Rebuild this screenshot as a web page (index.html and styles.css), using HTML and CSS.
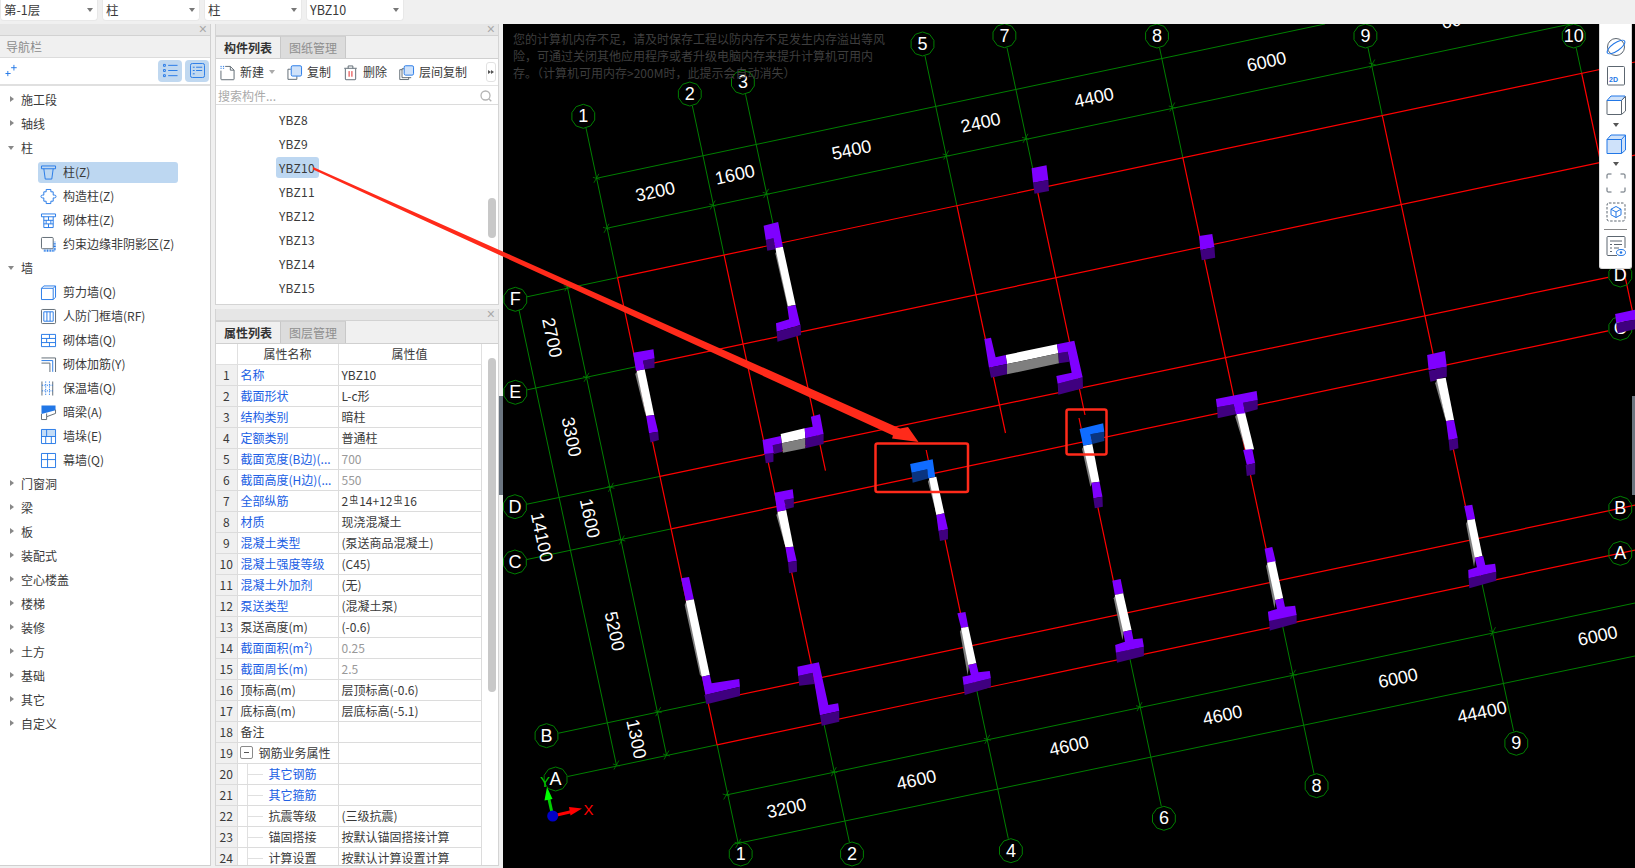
FILE: index.html
```html
<!DOCTYPE html>
<html lang="zh">
<head>
<meta charset="utf-8">
<title>构件列表</title>
<link rel="stylesheet" href="styles.css">
</head>
<body>
<svg width="0" height="0" class="defs">
  <defs>
    <polygon id="bub" points="11.4,3.7 7.1,9.7 0,12 -7.1,9.7 -11.4,3.7 -11.4,-3.7 -7.1,-9.7 0,-12 7.1,-9.7 11.4,-3.7"/>
    <path id="tk" d="M-2.5 4.5L2.5 -4.5M-3.5 -1L3.5 1"/>
  </defs>
</svg>

<header class="topbar">
  <div class="pick"><span>第-1层</span><i class="tri"></i></div>
  <div class="pick"><span>柱</span><i class="tri"></i></div>
  <div class="pick"><span>柱</span><i class="tri"></i></div>
  <div class="pick"><span>YBZ10</span><i class="tri"></i></div>
</header>

<main class="main">
  <aside class="nav">
    <div class="strip"><span class="close">×</span></div>
    <div class="nav-title">导航栏</div>
    <div class="nav-tools">
      <svg class="ico star" viewBox="0 0 16 16"><path class="b" d="M9.5 2v6M6.5 5h6M3 8.5v5.500M.5 11.2h5.500"/></svg>
      <span class="grow"></span>
      <span class="tbtn"><svg viewBox="0 0 16 16"><path class="b" d="M5.500 2.500h10M5.500 8h10M5.500 13.500h10"/><path class="b" d="M.5 1.500h2v2h-2zM.5 7h2v2h-2zM.5 12.500h2v2h-2z"/></svg></span>
      <span class="tbtn"><svg viewBox="0 0 16 16"><rect class="b" x=".5" y=".5" width="15" height="15" rx="2"/><path class="b" d="M3 4.500h2M6.500 4.500h6.500M3 8h2M6.500 8h6.500M3 11.500h2"/></svg></span>
    </div>
    <div class="tree">
      <div class="row"><i class="car"></i>施工段</div>
      <div class="row"><i class="car"></i>轴线</div>
      <div class="row"><i class="car open"></i>柱</div>
      <div class="sub"><div class="item sel"><svg class="ico" viewBox="0 0 16 16"><path class="b" d="M.5 1h15v3H.5zM3 4l1.500 11h7L13 4"/></svg>柱(Z)</div></div>
      <div class="sub"><div class="item"><svg class="ico" viewBox="0 0 16 16"><path class="b" d="M5.500 .5h5v2.500h2.500v3.500h1.500a1 1 0 0 1 0 3h-1.500v3.500h-2.500v2.500h-5v-2.500H3V9.500H1.500a1 1 0 0 1 0-3H3V3h2.500z"/></svg>构造柱(Z)</div></div>
      <div class="sub"><div class="item"><svg class="ico" viewBox="0 0 16 16"><path class="b" d="M.5 1h15v3H.5zM3 4v11.500h10V4M3 7.800h10M3 11.600h10M8 4v3.800M5.500 7.800v3.800M10.500 7.800v3.800M8 11.600v3.900"/></svg>砌体柱(Z)</div></div>
      <div class="sub"><div class="item"><svg class="ico" viewBox="0 0 16 16"><rect class="k" x=".5" y=".5" width="12.500" height="12" rx="1"/><path class="hatch" d="M3 14.500h11.500V5"/></svg>约束边缘非阴影区(Z)</div></div>
      <div class="row"><i class="car open"></i>墙</div>
      <div class="sub"><div class="item"><svg class="ico" viewBox="0 0 16 16"><path class="b" d="M.5 3.500h12.500v12H.5zM.5 3.500L3 1h12.500v12L13 15.500M13 3.500L15.500 1"/></svg>剪力墙(Q)</div></div>
      <div class="sub"><div class="item"><svg class="ico" viewBox="0 0 16 16"><rect class="k" x=".5" y=".5" width="15" height="15" rx="1"/><path class="b" d="M3 3h10v10H3zM6.300 3v10M9.700 3v10"/></svg>人防门框墙(RF)</div></div>
      <div class="sub"><div class="item"><svg class="ico" viewBox="0 0 16 16"><path class="b" d="M.5 1.500h15v13H.5zM.5 5.800h15M.5 10.200h15M9 1.500v4.300M6 5.800v4.400M9 10.200v4.300"/></svg>砌体墙(Q)</div></div>
      <div class="sub"><div class="item"><svg class="ico" viewBox="0 0 16 16"><path class="k" d="M.5 1h15v15"/><path class="b" d="M.5 3.800h12v12"/><path class="k" d="M.5 6.500h9v9.500"/></svg>砌体加筋(Y)</div></div>
      <div class="sub"><div class="item"><svg class="ico" viewBox="0 0 16 16"><path class="k" d="M1 .5v15M12.500 .5v15"/><path class="dash" d="M5 .5v15M9 .5v15"/><path class="dash" d="M1 4.500h11.500M1 10.500h11.500"/></svg>保温墙(Q)</div></div>
      <div class="sub"><div class="item"><svg class="ico" viewBox="0 0 16 16"><path class="bf" d="M.5 .5h15v5L.5 9.500z"/><path class="k" d="M.5 9.500v6h5.500v-3l9.500-3.500v-4M6 9v3.500"/></svg>暗梁(A)</div></div>
      <div class="sub"><div class="item"><svg class="ico" viewBox="0 0 16 16"><path class="lf" d="M.5 .5h15V8H.5z"/><path class="b" d="M.5 .5h15v15H.5zM.5 8h15M6 .5V8M5 8v7.500M11 8v7.500"/></svg>墙垛(E)</div></div>
      <div class="sub"><div class="item"><svg class="ico" viewBox="0 0 16 16"><path class="b" d="M.5 .5h15v15H.5zM.5 7h15M7 .5v15"/></svg>幕墙(Q)</div></div>
      <div class="row"><i class="car"></i>门窗洞</div>
      <div class="row"><i class="car"></i>梁</div>
      <div class="row"><i class="car"></i>板</div>
      <div class="row"><i class="car"></i>装配式</div>
      <div class="row"><i class="car"></i>空心楼盖</div>
      <div class="row"><i class="car"></i>楼梯</div>
      <div class="row"><i class="car"></i>装修</div>
      <div class="row"><i class="car"></i>土方</div>
      <div class="row"><i class="car"></i>基础</div>
      <div class="row"><i class="car"></i>其它</div>
      <div class="row"><i class="car"></i>自定义</div>
    </div>
  </aside>

  <section class="mid">
    <div class="panel list-panel">
      <div class="strip"><span class="close">×</span></div>
      <div class="tabs"><span class="tab on">构件列表</span><span class="tab">图纸管理</span></div>
      <div class="ctools">
        <span class="act new"><svg class="ico" viewBox="0 0 16 16"><path class="k" d="M5.500 1.500H11l4 4V15a.7.7 0 0 1-.7.7H1.700A.7.7 0 0 1 1 15V6"/><path class="k" d="M11 1.500v4h4"/><path class="dash" d="M.5 1.500h4M.5 3.500h4"/></svg>新建<i class="tri"></i></span>
        <span class="act"><svg class="ico" viewBox="0 0 16 16"><path class="k" d="M4 4.500H1v10.800h9.500V12"/><rect class="bl" x="4.500" y=".8" width="11" height="11" rx="1.500"/></svg>复制</span>
        <span class="act del"><svg class="ico" viewBox="0 0 14 16"><path class="k" d="M1.500 4v11a.7.7 0 0 0 .7.700h9.600a.7.7 0 0 0 .7-.7V4M.3 3.500h13.400M4.500 3.500V1h5v2.500"/><path class="redl" d="M5.500 6.500v6M8.500 6.500v6"/></svg>删除</span>
        <span class="act"><svg class="ico" viewBox="0 0 16 16"><path class="k" d="M3.500 5H.8v10.500h9.500V13M5.500 4H3.200v9.500H13"/><rect class="bl" x="5.500" y=".8" width="10" height="10" rx="1.500"/></svg>层间复制</span>
        <span class="grow"></span>
        <span class="more"><i class="mini"></i><i class="mini"></i></span>
      </div>
      <div class="search"><span class="grow">搜索构件...</span><svg class="sico" viewBox="0 0 12 12"><circle class="gq" cx="5.500" cy="5.500" r="4.500"/><path class="gq" d="M8.800 8.800l2.500 2.500"/></svg></div>
      <div class="items">
        <div class="li"><span>YBZ8</span></div>
        <div class="li"><span>YBZ9</span></div>
        <div class="li"><span class="cur">YBZ10</span></div>
        <div class="li"><span>YBZ11</span></div>
        <div class="li"><span>YBZ12</span></div>
        <div class="li"><span>YBZ13</span></div>
        <div class="li"><span>YBZ14</span></div>
        <div class="li"><span>YBZ15</span></div>
        <i class="thumb t1"></i>
      </div>
    </div>

    <div class="panel prop-panel">
      <div class="strip"><span class="close">×</span></div>
      <div class="tabs"><span class="tab on">属性列表</span><span class="tab">图层管理</span></div>
      <div class="tablewrap">
        <table class="props">
          <colgroup><col class="c0"><col class="c1"><col class="c2"></colgroup>
          <thead><tr><th></th><th>属性名称</th><th>属性值</th></tr></thead>
          <tbody>
            <tr><td>1</td><td class="lnk">名称</td><td>YBZ10</td></tr>
            <tr><td>2</td><td class="lnk">截面形状</td><td>L-c形</td></tr>
            <tr><td>3</td><td class="lnk">结构类别</td><td>暗柱</td></tr>
            <tr><td>4</td><td class="lnk">定额类别</td><td>普通柱</td></tr>
            <tr><td>5</td><td class="lnk">截面宽度(B边)(...</td><td class="gr">700</td></tr>
            <tr><td>6</td><td class="lnk">截面高度(H边)(...</td><td class="gr">550</td></tr>
            <tr><td>7</td><td class="lnk">全部纵筋</td><td>2<span class="rb">虫</span>14+12<span class="rb">虫</span>16</td></tr>
            <tr><td>8</td><td class="lnk">材质</td><td>现浇混凝土</td></tr>
            <tr><td>9</td><td class="lnk">混凝土类型</td><td>(泵送商品混凝土)</td></tr>
            <tr><td>10</td><td class="lnk">混凝土强度等级</td><td>(C45)</td></tr>
            <tr><td>11</td><td class="lnk">混凝土外加剂</td><td>(无)</td></tr>
            <tr><td>12</td><td class="lnk">泵送类型</td><td>(混凝土泵)</td></tr>
            <tr><td>13</td><td>泵送高度(m)</td><td>(-0.6)</td></tr>
            <tr><td>14</td><td class="lnk">截面面积(m²)</td><td class="gr">0.25</td></tr>
            <tr><td>15</td><td class="lnk">截面周长(m)</td><td class="gr">2.5</td></tr>
            <tr><td>16</td><td>顶标高(m)</td><td>层顶标高(-0.6)</td></tr>
            <tr><td>17</td><td>底标高(m)</td><td>层底标高(-5.1)</td></tr>
            <tr><td>18</td><td>备注</td><td></td></tr>
            <tr><td>19</td><td class="grp"><i class="minus"></i>钢筋业务属性</td><td></td></tr>
            <tr><td>20</td><td class="kid lnk">其它钢筋</td><td></td></tr>
            <tr><td>21</td><td class="kid lnk">其它箍筋</td><td></td></tr>
            <tr><td>22</td><td class="kid">抗震等级</td><td>(三级抗震)</td></tr>
            <tr><td>23</td><td class="kid">锚固搭接</td><td>按默认锚固搭接计算</td></tr>
            <tr><td>24</td><td class="kid">计算设置</td><td>按默认计算设置计算</td></tr>
          </tbody>
        </table>
        <i class="thumb t2"></i>
      </div>
    </div>
  </section>

  <section class="canvas">
    <svg class="cad" viewBox="503 24 1132 844" width="1132" height="844">
      <g class="gl">
        <path d="M586 128L617.600 277.600M692.400 106L724.100 255.100M745.500 94.300L777.300 243.800M925 56L956.900 205.700M1007 47.700L1037 188.800M1159.600 48L1182.900 157.900M1368 48L1382.300 115.700M1576.200 48L1581.700 73.500"/>
        <path d="M717.100 744.800L738.200 843.300L740 842M823.600 722.200L849.400 842M976.600 689.700L1008.300 838.700M1129.600 657.300L1161.300 806.300M1282.400 624.900L1314 773.700M1481.800 582.700L1513.700 731.300"/>
        <path d="M527 296.800L617.600 277.600M527.300 389.800L636.600 366.600M526.900 504.200L660 476.400M526.900 559.500L671.200 528.900M558.500 733.200L707.900 701.500M567.600 776.500L717.100 744.800"/>
        <path d="M596.400 178.300L1325 24M606.500 228.300L1570.500 24M726.200 795L1635 603M738.200 843.300L1635 656M519 310L616.400 765M567.300 286.700L666.500 755"/>
        <use href="#tk" x="596.400" y="178.300"/><use href="#tk" x="606.500" y="228.300"/><use href="#tk" x="712.700" y="205"/><use href="#tk" x="766.200" y="193.300"/><use href="#tk" x="946.200" y="155"/><use href="#tk" x="1025.500" y="138.300"/><use href="#tk" x="1172.300" y="107"/><use href="#tk" x="1372.300" y="64"/>
        <use href="#tk" x="567.300" y="286.700"/><use href="#tk" x="586.500" y="377.300"/><use href="#tk" x="610.900" y="487.300"/><use href="#tk" x="621.800" y="540"/><use href="#tk" x="658.200" y="711.700"/><use href="#tk" x="666.500" y="755"/><use href="#tk" x="616.400" y="765"/>
        <use href="#tk" x="726.200" y="795"/><use href="#tk" x="833.800" y="771.700"/><use href="#tk" x="987.300" y="739.300"/><use href="#tk" x="1139.500" y="706.700"/><use href="#tk" x="1293" y="674.300"/><use href="#tk" x="1493" y="631.700"/><use href="#tk" x="738.200" y="843.300"/>
      </g>
      <g class="rl">
        <path d="M617.600 277.600L717.100 744.800M724.100 255.100L823.600 722.200M777.300 243.800L825.500 470.700M956.900 205.700L1005.500 433M926.200 450L976.600 689.700M1037 188.800L1085 415M1079 418L1129.600 657.300M1182.900 157.900L1282.400 624.900M1382.300 115.700L1481.800 582.700M1581.700 73.500L1635 323"/>
        <path d="M617.600 277.600L1635 62M636.600 366.600L1635 155.100M660 476.400L1608 277.300M671.200 528.900L1608 330.900M707.900 701.500L1635 505.200M717.100 744.800L1635 550.200"/>
      </g>
      <g class="bubbles">
        <use href="#bub" x="583.300" y="116.300"/><use href="#bub" x="689.800" y="94"/><use href="#bub" x="742.900" y="82.300"/><use href="#bub" x="922.500" y="44"/><use href="#bub" x="1004.400" y="35.700"/><use href="#bub" x="1157" y="36"/><use href="#bub" x="1365.400" y="36"/><use href="#bub" x="1573.700" y="36"/>
        <use href="#bub" x="740.700" y="854"/><use href="#bub" x="852" y="854"/><use href="#bub" x="1010.900" y="850.700"/><use href="#bub" x="1163.900" y="818.300"/><use href="#bub" x="1316.600" y="785.700"/><use href="#bub" x="1516.300" y="743.300"/>
        <use href="#bub" x="515.300" y="299.300"/><use href="#bub" x="515.300" y="392.300"/><use href="#bub" x="514.900" y="506.700"/><use href="#bub" x="514.900" y="562"/><use href="#bub" x="546.500" y="735.700"/><use href="#bub" x="555.600" y="779"/>
        <use href="#bub" x="1620.300" y="275"/><use href="#bub" x="1620.300" y="328.300"/><use href="#bub" x="1620.300" y="508.300"/><use href="#bub" x="1620.300" y="553.300"/>
      </g>
      <g class="labels"><text x="1620.300" y="328.300">C</text></g>

      <g transform="translate(500 20) scale(.3636 .3333)">
        <polygon class="sl" points="757,700 764,690 800,860 794,875"/>
        <polygon class="wh" points="757,683 778,680 813,855 792,858"/>
        <polygon class="dk" points="731,660 752,655 758,688 735,692"/>
        <polygon class="pu" points="725,617 765,606 778,680 757,684 752,655 731,660"/>
        <polygon class="pu" points="790,860 813,855 826,915 761,935 759,910 795,898"/>
        <polygon class="dk" points="761,935 827,915 828,945 763,965"/>
        <polygon class="pu" points="1462,445 1503,436 1508,480 1466,488"/>
        <polygon class="dk" points="1466,488 1508,480 1510,513 1470,521"/>
        <polygon class="sl" points="372,1062 378,1052 402,1188 398,1175"/>
        <polygon class="wh" points="376,1052 398,1048 424,1185 402,1188"/>
        <polygon class="dk" points="393,1022 425,1015 425,1043 398,1048"/>
        <polygon class="pu" points="366,998 422,988 425,1015 393,1022 398,1048 374,1052"/>
        <polygon class="pu" points="402,1188 424,1185 435,1235 410,1240"/>
        <polygon class="dk" points="410,1240 435,1235 437,1260 414,1268"/>
      </g>

      <g transform="translate(975 325) scale(.3333)">
        <polygon class="wh" points="92,90 246,58 250,85 96,117"/>
        <polygon class="gy" points="96,117 250,85 252,115 96,148"/>
        <polygon class="pu" points="28,42 48,38 62,97 92,90 96,117 42,128"/>
        <polygon class="dk" points="42,128 96,117 96,148 48,158"/>
        <polygon class="dk" points="250,85 278,80 283,110 252,115"/>
        <polygon class="dk" points="248,176 323,157 324,190 250,209"/>
        <polygon class="pu" points="246,58 298,47 323,157 248,176 244,153 290,143 278,80 250,85"/>
      </g>

      <g transform="translate(500 430) scale(.3636 .3333)">
        <polygon class="wh" points="772,12 838,-5 840,25 775,40"/>
        <polygon class="gy" points="775,40 840,25 840,55 778,68"/>
        <polygon class="dk" points="727,68 752,65 752,95 731,100"/>
        <polygon class="dk" points="750,46 775,40 777,65 753,72"/>
        <polygon class="pu" points="722,30 772,18 775,40 750,46 753,68 727,72"/>
        <polygon class="dk" points="840,25 890,12 890,42 840,55"/>
        <polygon class="pu" points="855,-40 880,-47 890,12 840,25 838,-5 860,-10"/>

        <polygon class="sl" points="760,255 766,245 786,352 782,340"/>
        <polygon class="wh" points="763,245 787,240 807,350 785,352"/>
        <polygon class="dk" points="782,210 808,205 808,232 787,238"/>
        <polygon class="pu" points="755,188 805,178 808,205 782,210 787,240 762,245"/>
        <polygon class="pu" points="785,352 807,350 816,393 792,397"/>
        <polygon class="dk" points="792,397 816,393 817,425 795,430"/>

        <polygon class="sl" points="1177,155 1182,145 1202,255 1198,243"/>
        <polygon class="wh" points="1180,145 1200,140 1222,250 1200,255"/>
        <polygon class="nv" points="1132,128 1175,118 1180,145 1135,158"/>
        <polygon class="bu" points="1128,102 1190,88 1197,140 1178,145 1175,118 1132,128"/>
        <polygon class="pu" points="1200,255 1222,250 1232,298 1206,303"/>
        <polygon class="dk" points="1206,303 1232,298 1232,328 1210,333"/>

        <polygon class="pu" points="498,445 520,441 533,508 511,512"/>
        <polygon class="sl" points="508,525 513,512 557,740 550,735"/>
        <polygon class="wh" points="511,512 533,508 577,735 555,740"/>
        <polygon class="pu" points="555,740 577,735 582,760 658,747 660,770 565,795"/>
        <polygon class="dk" points="562,795 660,770 660,798 568,823"/>

        <polygon class="dk" points="820,738 860,728 865,762 823,767"/>
        <polygon class="pu" points="818,710 877,697 903,825 930,820 933,843 880,856 860,728 820,738"/>
        <polygon class="dk" points="880,856 933,843 933,875 885,887"/>

        <polygon class="pu" points="1258,550 1280,546 1288,590 1268,594"/>
        <polygon class="sl" points="1265,605 1270,594 1290,705 1286,735"/>
        <polygon class="wh" points="1268,594 1288,590 1310,700 1288,705"/>
        <polygon class="dk" points="1275,765 1350,745 1350,772 1278,795"/>
        <polygon class="pu" points="1288,705 1310,700 1316,727 1347,723 1350,745 1275,765 1272,740 1295,735"/>
      </g>

      <g transform="translate(1065 430) scale(.3636 .3333)">
        <polygon class="sl" points="47,57 52,47 75,158 70,170"/>
        <polygon class="wh" points="50,47 75,42 95,155 73,158"/>
        <polygon class="nv" points="70,13 108,5 108,33 75,42"/>
        <polygon class="bu" points="40,-3 105,-20 108,5 70,13 75,42 50,47"/>
        <polygon class="pu" points="73,158 95,155 103,200 78,205"/>
        <polygon class="dk" points="78,205 103,200 104,230 82,235"/>

        <polygon class="sl" points="468,-40 474,-50 498,62 494,52"/>
        <polygon class="wh" points="472,-50 495,-53 520,58 497,62"/>
        <polygon class="dk" points="418,-68 464,-77 470,-47 420,-35"/>
        <polygon class="dk" points="490,-82 530,-90 530,-62 495,-52"/>
        <polygon class="pu" points="415,-93 527,-117 530,-90 490,-82 495,-50 470,-47 464,-77 418,-68"/>
        <polygon class="pu" points="490,60 515,57 523,100 500,105"/>
        <polygon class="dk" points="497,105 523,100 523,133 500,138"/>

        <polygon class="pu" points="996,-225 1045,-237 1050,-190 1000,-180"/>
        <polygon class="dk" points="1000,-178 1022,-182 1025,-150 1005,-145"/>
        <polygon class="dk" points="1020,-185 1050,-190 1050,-160 1022,-152"/>
        <polygon class="sl" points="1018,-140 1024,-152 1048,-27 1044,-40"/>
        <polygon class="wh" points="1022,-152 1047,-157 1070,-30 1048,-27"/>
        <polygon class="pu" points="1048,-27 1070,-30 1080,25 1055,30"/>
        <polygon class="dk" points="1055,30 1080,25 1082,55 1058,62"/>

        <polygon class="pu" points="130,452 153,447 161,490 137,495"/>
        <polygon class="sl" points="134,505 139,495 162,605 158,630"/>
        <polygon class="wh" points="137,495 160,490 183,600 160,605"/>
        <polygon class="dk" points="140,668 217,650 217,678 143,698"/>
        <polygon class="pu" points="160,605 183,600 188,628 213,625 217,650 140,668 138,645 165,635"/>

        <polygon class="pu" points="549,356 570,351 580,395 556,398"/>
        <polygon class="sl" points="553,408 558,398 580,510 576,535"/>
        <polygon class="wh" points="556,398 578,394 600,505 578,510"/>
        <polygon class="dk" points="561,570 637,553 637,580 563,602"/>
        <polygon class="pu" points="578,510 600,505 605,530 633,527 637,555 561,573 558,545 583,537"/>

        <polygon class="pu" points="1098,228 1120,224 1128,267 1106,271"/>
        <polygon class="sl" points="1103,281 1108,271 1129,383 1125,410"/>
        <polygon class="wh" points="1106,271 1127,267 1148,378 1127,383"/>
        <polygon class="dk" points="1110,445 1186,425 1186,452 1112,475"/>
        <polygon class="pu" points="1127,383 1150,378 1156,405 1183,401 1186,425 1110,445 1109,420 1133,412"/>
      </g>

      <g transform="translate(1065 0) scale(.3636 .3333)">
        <polygon class="pu" points="369,708 405,702 411,742 372,750"/>
        <polygon class="dk" points="372,750 411,742 413,773 376,781"/>
        <polygon class="pu" points="1513,942 1575,928 1575,958 1516,968"/>
        <polygon class="dk" points="1516,968 1575,958 1575,986 1520,1000"/>
      </g>

      <g class="labels">
        <text x="583.300" y="116.300">1</text><text x="689.800" y="94">2</text><text x="742.900" y="82.300">3</text><text x="922.500" y="44">5</text><text x="1004.400" y="35.700">7</text><text x="1157" y="36">8</text><text x="1365.400" y="36">9</text><text x="1573.700" y="36">10</text>
        <text x="740.700" y="854">1</text><text x="852" y="854">2</text><text x="1010.900" y="850.700">4</text><text x="1163.900" y="818.300">6</text><text x="1316.600" y="785.700">8</text><text x="1516.300" y="743.300">9</text>
        <text x="515.300" y="299.300">F</text><text x="515.300" y="392.300">E</text><text x="514.900" y="506.700">D</text><text x="514.900" y="562">C</text><text x="546.500" y="735.700">B</text><text x="555.600" y="779">A</text>
        <text x="1620.300" y="275">D</text><text x="1620.300" y="508.300">B</text><text x="1620.300" y="553.300">A</text>

        <text x="655.300" y="191.700" transform="rotate(-12 655.300 191.700)">3200</text>
        <text x="734.900" y="174.700" transform="rotate(-12 734.900 174.700)">1600</text>
        <text x="851.600" y="150" transform="rotate(-12 851.600 150)">5400</text>
        <text x="980.700" y="122.700" transform="rotate(-12 980.700 122.700)">2400</text>
        <text x="1094" y="97.700" transform="rotate(-12 1094 97.700)">4400</text>
        <text x="1266.500" y="61.700" transform="rotate(-12 1266.500 61.700)">6000</text>
        <text x="1461" y="19" transform="rotate(-12 1461 19)">6000</text>
        <text x="552" y="337.700" transform="rotate(78 552 337.700)">2700</text>
        <text x="571.400" y="436.900" transform="rotate(78 571.400 436.900)">3300</text>
        <text x="589.800" y="518.300" transform="rotate(78 589.800 518.300)">1600</text>
        <text x="541.800" y="537.300" transform="rotate(78 541.800 537.300)">14100</text>
        <text x="614.500" y="631.300" transform="rotate(78 614.500 631.300)">5200</text>
        <text x="636.400" y="739" transform="rotate(78 636.400 739)">1300</text>
        <text x="786.500" y="808.300" transform="rotate(-12 786.500 808.300)">3200</text>
        <text x="916.400" y="780" transform="rotate(-12 916.400 780)">4600</text>
        <text x="1069" y="746" transform="rotate(-12 1069 746)">4600</text>
        <text x="1222.500" y="715.300" transform="rotate(-12 1222.500 715.300)">4600</text>
        <text x="1398" y="678.300" transform="rotate(-12 1398 678.300)">6000</text>
        <text x="1597.700" y="636" transform="rotate(-12 1597.700 636)">6000</text>
        <text x="1482" y="712.300" transform="rotate(-12 1482 712.300)">44400</text>
      </g>

      <g class="axes">
        <path class="ax-g" d="M552.700 816L548.500 797"/>
        <polygon class="fg" points="547,787 552.500,799 544.500,800.500"/>
        <path class="ax-r" d="M552.700 816L572 811.500"/>
        <polygon class="fr" points="582,808.500 570.500,815.500 569,807"/>
        <circle class="fb" cx="552.700" cy="816" r="5.500"/>
        <text class="ty" x="545" y="781.500">Y</text>
        <text class="tx" x="588.400" y="809">X</text>
      </g>
    </svg>

    <p class="memo">您的计算机内存不足，请及时保存工程以防内存不足发生内存溢出等风险，可通过关闭其他应用程序或者升级电脑内存来提升计算机可用内存。（计算机可用内存&gt;200M时，此提示会自动消失）</p>

    <div class="vtools">
      <svg class="vi" viewBox="0 0 20 20"><circle class="k" cx="10" cy="10" r="8.500"/><ellipse class="b" cx="10" cy="10" rx="10.500" ry="4" transform="rotate(-35 10 10)"/></svg>
      <svg class="vi" viewBox="0 0 20 20"><rect class="k" x="1.500" y=".5" width="17" height="18.500" rx="1"/><text class="t2d" x="3" y="16">2D</text></svg>
      <svg class="vi" viewBox="0 0 20 20"><path class="k" d="M1 5.500h14.500V19a.5.500 0 0 1-.5.500H1.500A.5.500 0 0 1 1 19z"/><path class="lb" d="M1 5.500L5 1h14v.5l-3.500 4z"/><path class="k" d="M15.500 19.500L19.500 16V1.500L15.500 5.500"/></svg>
      <i class="vtri"></i>
      <svg class="vi" viewBox="0 0 20 20"><path class="lb2" d="M1 5.500L5 1h14.500V16l-4 3.500H1z"/><path class="b" d="M1 5.500h14.500v14M15.500 5.500L19.500 1"/></svg>
      <i class="vtri"></i>
      <svg class="vi" viewBox="0 0 20 20"><path class="k" d="M1 5.500V2a1 1 0 0 1 1-1h3.500M14.500 1H18a1 1 0 0 1 1 1v3.500M19 14.500V18a1 1 0 0 1-1 1h-3.500M5.500 19H2a1 1 0 0 1-1-1v-3.500"/></svg>
      <svg class="vi" viewBox="0 0 20 20"><rect class="kd" x="1" y="1" width="18" height="18" rx="2"/><path class="b" d="M10 4.500l5 2.700v5.600l-5 2.700-5-2.700V7.200zM5 7.200l5 2.800 5-2.800M10 10v5.500"/></svg>
      <hr class="vsep">
      <svg class="vi" viewBox="0 0 20 20"><path class="k" d="M11 19.500H2a1 1 0 0 1-1-1V1.500a1 1 0 0 1 1-1h16a1 1 0 0 1 1 1V12M4 5h12M4 8.500h2M8 8.500h8M4 12h2M8 12h5M4 15.500h2"/><ellipse class="b" cx="15" cy="16.500" rx="4.500" ry="3"/><circle class="bf" cx="15" cy="16.500" r="1.300"/></svg>
    </div>
  </section>

  <i class="grip left"></i>
  <i class="grip right"></i>
</main>

<svg class="annot" viewBox="0 0 1635 868" width="1635" height="868">
  <polygon class="arrow" points="313,167 900,428.500 908,427 918.500,442 892,438.500 893,435.500 313,169.500"/>
  <rect class="box" x="875.500" y="443.500" width="92.500" height="48.500" rx="2"/>
  <rect class="box" x="1066.500" y="409.500" width="40" height="45" rx="2"/>
</svg>
</body>
</html>
```
FILE: styles.css
```css
* { box-sizing: border-box; }
html, body { margin: 0; height: 868px; overflow: hidden; }
body {
  position: relative;
  background: #f0f0f0;
  color: #3a3a3a;
  font: 12px/1 "Noto Sans CJK SC", "Liberation Sans", sans-serif;
}
i { display: block; font-style: normal; }
.defs { position: absolute; }
.grow { flex: 1; }

/* top bar */
.topbar { height: 24px; display: flex; gap: 4px; align-items: flex-start; }
.pick {
  width: 98px; height: 21px; padding: 0 3px; display: flex; align-items: center;
  justify-content: space-between; background: #fff; border-radius: 0 0 4px 4px;
  font-size: 12.500px; border: 1px solid #e8e8e8; border-top: 0;
}
.pick .tri { margin-right: 1px; }
.tri { width: 0; height: 0; border: 3px solid transparent; border-top: 4px solid #777; border-bottom: 0; }

.main { display: flex; height: 844px; position: relative; }

/* strip */
.strip { height: 12px; background: #e6e6e6; border-bottom: 1px solid #d2d2d2; position: relative; }
.close { position: absolute; right: 3px; top: 0; font: 14px/11px "Liberation Sans", sans-serif; color: #a8a8a8; }

/* nav */
.nav { width: 211px; height: 842px; background: #fff; border-right: 1px solid #d0d0d0; border-bottom: 1px solid #d0d0d0; }
.nav-title { height: 22px; padding: 5px 6px 0; background: #f0f0f0; color: #8c8c8c; border-bottom: 1px solid #dcdcdc; }
.nav-tools { height: 28px; display: flex; align-items: center; gap: 3px; padding: 0 1px 1px 5px; border-bottom: 2px solid #e0e0e0; }
.star { margin: 0; }
.tbtn { width: 24px; height: 22px; background: #c0d8f0; border-radius: 4px; display: flex; align-items: center; justify-content: center; }
.tbtn svg { width: 15px; height: 15px; display: block; }
.tree { padding-top: 2px; }
.row { height: 24px; display: flex; align-items: center; padding-left: 21px; position: relative; font-size: 12px; }
.car { position: absolute; left: 10px; top: 8px; width: 0; height: 0; border: 3.500px solid transparent; border-left: 4px solid #888; border-right: 0; }
.car.open { left: 8px; top: 10px; border: 3.500px solid transparent; border-top: 4px solid #888; border-bottom: 0; }
.sub { height: 24px; padding: 1.500px 0 1.500px 38px; }
.item { height: 21px; width: 140px; display: flex; align-items: center; gap: 7px; padding-left: 3px; white-space: nowrap; border-radius: 3px; }
.item.sel { background: #bdd7f1; }
.ico { width: 15px; height: 15px; flex: none; display: block; overflow: visible; }

/* svg paint */
.b { fill: none; stroke: #2277e6; stroke-width: 1; }
.k { fill: none; stroke: #5c6670; stroke-width: 1; }
.bf { fill: #2277e6; stroke: none; }
.lf { fill: #c4dcf6; stroke: none; }
.bl { fill: #cfe2fa; stroke: #2277e6; stroke-width: 1; }
.lb { fill: #cfe2fa; stroke: #2277e6; stroke-width: 1; }
.lb2 { fill: #cfe2fa; stroke: #2277e6; stroke-width: 1; }
.kd { fill: none; stroke: #5c6670; stroke-dasharray: 2.500 1.500; }
.dash { fill: none; stroke: #2277e6; stroke-dasharray: 1.300 1.300; }
.hatch { fill: none; stroke: #2277e6; stroke-width: 2.500; stroke-dasharray: 1 .7; }
.redl { fill: none; stroke: #e02020; }
.gq { fill: none; stroke: #b4b4b4; stroke-width: 1.300; }

/* middle column */
.mid { width: 288px; display: flex; flex-direction: column; gap: 4px; padding-left: 4px; }
.panel { width: 284px; background: #fff; border: 1px solid #d4d4d4; border-top: 0; position: relative; }
.list-panel { height: 281px; }
.prop-panel { height: 557px; }
.tabs { height: 23px; background: #f0f0f0; display: flex; border-bottom: 1px solid #d0d0d0; }
.tab { width: 65px; height: 22px; display: flex; align-items: center; justify-content: center; font-size: 12px; color: #8f8f8f; background: #dcdcdc; border-right: 1px solid #c8c8c8; border-top: 1px solid #d0d0d0; }
.tab.on { font-weight: 700; color: #333; background: #f0f0f0; border-right: 1px solid #c8c8c8; }
.ctools { height: 27px; display: flex; align-items: center; padding: 0 2px 0 4px; border-bottom: 1px solid #e4e4e4; }
.act { display: flex; align-items: center; gap: 5px; margin-right: 12px; white-space: nowrap; }
.act.new .tri { border-top-color: #aaa; }
.more { width: 10px; height: 20px; border: 1px solid #e2e2e2; border-radius: 3px; display: flex; align-items: center; justify-content: center; }
.mini { width: 0; height: 0; border: 2.500px solid transparent; border-left: 3px solid #555; border-right: 0; }
.search { height: 19px; display: flex; align-items: center; padding: 2px 6px 0 2px; border-bottom: 1px solid #dcdcdc; color: #aaa; }
.sico { width: 12px; height: 12px; display: block; }
.items { padding-top: 2px; position: relative; height: 198px; }
.li { height: 24px; display: flex; align-items: center; padding-left: 60px; font-size: 12px; letter-spacing: .2px; }
.li span { padding: 0 4px 0 3px; height: 21px; line-height: 21px; border-radius: 3px; }
.li .cur { background: #bdd7f1; }
.thumb { position: absolute; right: 2px; width: 8px; border-radius: 4px; background: #c8c8c8; }
.t1 { top: 93px; height: 40px; }
.t2 { top: 14px; height: 334px; }

/* table */
.tablewrap { position: relative; height: 521px; overflow: hidden; }
.props { width: 265px; table-layout: fixed; border-collapse: collapse; font-size: 12px; }
.c0 { width: 21px; }
.c1 { width: 101px; }
.c2 { width: 143px; }
.props th { height: 20px; font-weight: 400; text-align: center; padding: 0; border: 1px solid #e0e0e0; border-top: 0; border-left: 0; }
.props td { height: 21px; padding: 0 0 0 3px; border: 1px solid #dcdcdc; border-left: 0; white-space: nowrap; overflow: hidden; position: relative; }
.props td:first-child { background: #f0f0f0; text-align: center; padding: 0; font-size: 12px; }
.props .lnk { color: #2060e4; }
.props .gr { color: #999; }
.rb { font-size: 9px; position: relative; top: -3px; margin: 0 1px; }
.props .grp { padding-left: 21px; }
.minus { position: absolute; left: 2px; top: 3px; width: 13px; height: 13px; border: 1px solid #8a8a8a; border-radius: 2px; }
.minus::after { content: ""; position: absolute; left: 3px; top: 5px; width: 5px; height: 1px; background: #555; }
.props .kid { padding-left: 31px; }
.kid::before { content: ""; position: absolute; left: 9px; top: 0; width: 1px; height: 100%; background: #e0e0e0; }
.kid::after { content: ""; position: absolute; left: 9px; top: 10px; width: 16px; height: 1px; background: #e0e0e0; }

/* canvas */
.canvas { width: 1132px; margin-left: 4px; height: 844px; background: #000; position: relative; overflow: hidden; }
.cad { display: block; }
.gl path { fill: none; stroke: #007f00; stroke-width: 1; }
.gl use { fill: none; stroke: #007f00; stroke-width: .8; }
.rl path { fill: none; stroke: #f00; stroke-width: 1.200; }
.bubbles use { fill: none; stroke: #007f00; stroke-width: 1; }
.labels text { fill: #fff; font: 18px "Liberation Sans", sans-serif; text-anchor: middle; dominant-baseline: central; }
.pu { fill: #7f00ff; }
.dk { fill: #3f007f; }
.wh { fill: #fff; }
.gy { fill: #7f7f7f; }
.sl { fill: #7f7f7f; }
.bu { fill: #0f6cff; }
.nv { fill: #0a347f; }
.ax-g { stroke: #0c0; stroke-width: 3; fill: none; }
.ax-r { stroke: #f00; stroke-width: 3; fill: none; }
.fg { fill: #0f0; }
.fr { fill: #f00; }
.fb { fill: #0000c8; }
.ty, .tx { font: 15px "Liberation Sans", sans-serif; text-anchor: middle; dominant-baseline: central; }
.ty { fill: #0c0; }
.tx { fill: #f00; }
.memo { position: absolute; left: 10px; top: 6px; width: 373px; margin: 0; font-size: 12px; line-height: 17px; color: #3e3e3e; }

/* right tool column */
.vtools {
  position: absolute; left: 1096px; top: 0; width: 33px; height: 245px; background: #fff;
  border: 1px solid #d8d8d8; border-top: 0; border-radius: 0 0 3px 3px;
  display: flex; flex-direction: column; align-items: center; padding-top: 13px;
}
.vi { width: 20px; height: 20px; display: block; overflow: visible; margin-bottom: 9px; }
.t2d { font: 700 7px "Liberation Sans", sans-serif; fill: #2277e6; }
.vtri { width: 0; height: 0; border: 3.500px solid transparent; border-top: 4px solid #555; border-bottom: 0; margin: -1px 0 7px; }
.vsep { width: 23px; height: 1px; margin: -2px 0 6px; border: 0; background: #888; }

/* collapse grips */
.grip { position: absolute; top: 372px; height: 99px; background: #6b7580; }
.grip.left { left: 499px; width: 4px; }
.grip.right { left: 1632px; width: 3px; }

/* annotation */
.annot { position: absolute; left: 0; top: 0; pointer-events: none; }
.arrow { fill: #ff2a1a; }
.box { fill: none; stroke: #ff2a1a; stroke-width: 2.500; }
```
